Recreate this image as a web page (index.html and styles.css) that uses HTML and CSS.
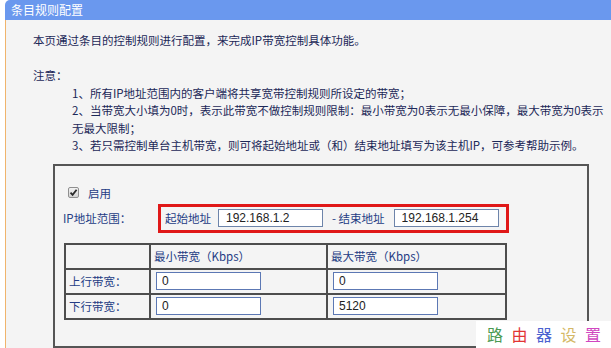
FILE: index.html
```html
<!DOCTYPE html>
<html lang="zh-CN">
  <head>
    <meta charset="UTF-8" />
    <title>条目规则配置</title>
    <link rel="stylesheet" href="styles.css">
  </head>
  <body>
    <div class="panel">
      <div class="title">条目规则配置</div>
      <div class="content">
        <p class="line">本页通过条目的控制规则进行配置，来完成IP带宽控制具体功能。</p>
        <p class="line">&nbsp;</p>
        <p class="line">注意：</p>
        <div class="notes">
          <p class="line">1、所有IP地址范围内的客户端将共享宽带控制规则所设定的带宽；</p>
          <p class="line">2、当带宽大小填为0时，表示此带宽不做控制规则限制：最小带宽为0表示无最小保障，最大带宽为0表示<br>无最大限制；</p>
          <p class="line">3、若只需控制单台主机带宽，则可将起始地址或（和）结束地址填写为该主机IP，可参考帮助示例。</p>
        </div>

        <div class="box">
          <div class="enable">
            <span class="check">
              <svg width="9" height="9" viewBox="0 0 9 9"><path d="M1.5 4.6 L3.6 6.8 L7.6 1.8" fill="none" stroke="#2b2b2b" stroke-width="1.8"/></svg>
            </span>
            <span>启用</span>
          </div>

          <div class="range">
            <span class="range-label">IP地址范围：</span>
            <div class="range-box">
              <span>起始地址</span>
              <input class="ip" type="text" value="192.168.1.2">
              <span class="dash">- 结束地址</span>
              <input class="ip" type="text" value="192.168.1.254">
            </div>
          </div>

          <table class="bw">
            <tr>
              <td class="c1"></td>
              <td class="c2">最小带宽（Kbps）</td>
              <td class="c3">最大带宽（Kbps）</td>
            </tr>
            <tr>
              <td class="c1">上行带宽：</td>
              <td class="c2"><input class="num" type="text" value="0"></td>
              <td class="c3"><input class="num" type="text" value="0"></td>
            </tr>
            <tr>
              <td class="c1">下行带宽：</td>
              <td class="c2"><input class="num" type="text" value="0"></td>
              <td class="c3"><input class="num" type="text" value="5120"></td>
            </tr>
          </table>
        </div>
      </div>
    </div>

    <div class="mark"><span class="g">路</span><span class="r">由</span><span class="b">器</span><span class="y">设</span><span class="m">置</span></div>
  </body>
</html>
```

FILE: styles.css
```css
* {
  margin: 0;
  padding: 0;
  box-sizing: border-box;
}

body {
  background: #fff;
  font-family: "Noto Sans CJK SC", sans-serif;
  font-size: 11.5px;
  color: #1c2858;
  overflow: hidden;
}

.panel {
  margin-left: 5px;
}

.title {
  height: 20px;
  line-height: 20px;
  padding-left: 6px;
  background: #6a98ee;
  border-top-left-radius: 5px;
  color: #fff;
  font-size: 12px;
}

.content {
  height: 328px;
  padding: 12px 0 0 27px;
  background: #f4f4f4;
  border-left: 1px solid #f0b46c;
}

.line {
  line-height: 17.5px;
  white-space: nowrap;
}

.notes {
  padding-left: 39px;
}

.box {
  width: 536px;
  height: 184px;
  margin: 9px 0 0 20px;
  padding: 18px 0 0 8px;
  border: 2px solid #555;
  color: #243c84;
}

.enable {
  display: flex;
  align-items: center;
  gap: 9px;
  height: 18px;
  padding-left: 5px;
}

.check {
  display: flex;
  align-items: center;
  justify-content: center;
  width: 11px;
  height: 11px;
  border: 1px solid #8f8f8f;
  border-radius: 2px;
  background: linear-gradient(#f2f2f2, #d4d4d4);
}

.range {
  display: flex;
  align-items: center;
  margin-top: 2px;
}

.range-label {
  width: 95px;
}

.range-box {
  display: flex;
  align-items: center;
  width: 351px;
  height: 29px;
  padding: 0 3px 0 4px;
  border: 3px solid #e01818;
}

.ip {
  width: 105px;
  height: 18px;
  margin: 0 9px 0 7px;
  padding-left: 7px;
  border: 1px solid #6d84aa;
  background: #fff;
  font: 12px "Liberation Sans", sans-serif;
  color: #222;
  outline: none;
}

.dash {
  margin-left: 0;
}

.range-box .ip:last-child {
  margin: 0 0 0 9px;
}

.bw {
  margin: 10px 0 0 1px;
  border-collapse: collapse;
  border: 2px solid #4d4d4d;
}

.bw td {
  height: 25px;
  padding: 0 0 0 3px;
  border: 2px solid #4d4d4d;
  vertical-align: middle;
}

.bw .c1 {
  width: 85px;
}

.bw .c2 {
  width: 177px;
}

.bw .c3 {
  width: 179px;
}

.num {
  display: block;
  width: 105px;
  height: 18px;
  margin-left: 2px;
  padding-left: 5px;
  border: 1px solid #5c78b4;
  background: #fff;
  font: 12px "Liberation Sans", sans-serif;
  color: #222;
  outline: none;
}

.mark {
  position: absolute;
  left: 476px;
  top: 321px;
  width: 135px;
  height: 27px;
  padding-left: 11px;
  background: #fff;
  font-size: 16px;
  line-height: 27px;
  letter-spacing: 8.5px;
  white-space: nowrap;
}

.mark .g { color: #4a9a52; }
.mark .r { color: #e23434; }
.mark .b { color: #4a62d0; }
.mark .y { color: #d4b866; }
.mark .m { color: #d046c0; }
```
